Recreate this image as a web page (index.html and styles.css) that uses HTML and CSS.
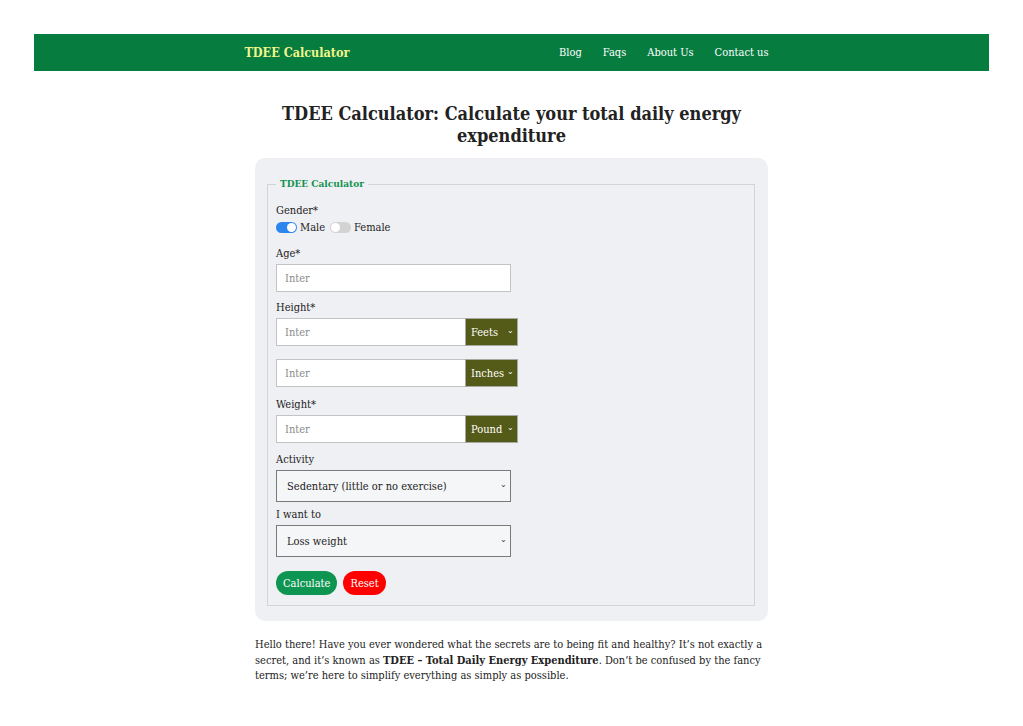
FILE: index.html
```html
<!DOCTYPE html>
<html lang="en">
<head>
  <meta charset="UTF-8" />
  <meta name="viewport" content="width=device-width, initial-scale=1.0"/>
  <title>TDEE Calculator</title>
  <link rel="stylesheet" href="styles.css">
</head>
<body>

  <header class="topbar">
    <div class="topbar-inner">
      <a class="logo" href="#">TDEE Calculator</a>
      <nav class="nav">
        <a href="#">Blog</a>
        <a href="#">Faqs</a>
        <a href="#">About Us</a>
        <a href="#">Contact us</a>
      </nav>
    </div>
  </header>

  <main class="container">
    <h1>TDEE Calculator: Calculate your total daily energy expenditure</h1>

    <div class="calc-card">
      <fieldset>
        <legend>TDEE Calculator</legend>

        <div class="group group-gender">
          <label>Gender*</label>
          <div class="gender-row">
            <span class="switch on"></span><span class="opt">Male</span>
            <span class="switch"></span><span class="opt">Female</span>
          </div>
        </div>

        <div class="group">
          <label for="age">Age*</label>
          <input type="text" id="age" class="text-input" placeholder="Inter">
        </div>

        <div class="group group-height">
          <label>Height*</label>
          <div class="unit-row">
            <input type="text" placeholder="Inter">
            <div class="unit">Feets <span class="chev">&#8964;</span></div>
          </div>
          <div class="unit-row second">
            <input type="text" placeholder="Inter">
            <div class="unit">Inches <span class="chev">&#8964;</span></div>
          </div>
        </div>

        <div class="group group-weight">
          <label>Weight*</label>
          <div class="unit-row">
            <input type="text" placeholder="Inter">
            <div class="unit">Pound <span class="chev">&#8964;</span></div>
          </div>
        </div>

        <div class="group group-activity">
          <label>Activity</label>
          <div class="select-box">Sedentary (little or no exercise) <span class="chev dark">&#8964;</span></div>
        </div>

        <div class="group group-goal">
          <label>I want to</label>
          <div class="select-box">Loss weight <span class="chev dark">&#8964;</span></div>
        </div>

        <div class="buttons">
          <button class="btn btn-calc">Calculate</button>
          <button class="btn btn-reset">Reset</button>
        </div>
      </fieldset>
    </div>

    <p class="intro-text">Hello there! Have you ever wondered what the secrets are to being fit and healthy? It’s not exactly a secret, and it’s known as <strong>TDEE – Total Daily Energy Expenditure</strong>. Don’t be confused by the fancy terms; we’re here to simplify everything as simply as possible.</p>
  </main>

</body>
</html>
```

FILE: styles.css
```css
body {
  margin: 0;
  padding: 34px 34px 0;
  font-family: 'DejaVu Serif Condensed', 'DejaVu Serif', serif;
  font-stretch: condensed;
  background-color: #ffffff;
  color: #222;
}

.topbar {
  background-color: #067c3f;
  height: 37px;
}

.topbar-inner {
  max-width: 524px;
  margin: 0 auto;
  padding-right: 10px;
  height: 100%;
  display: flex;
  align-items: center;
  justify-content: space-between;
}

.logo {
  color: #f2f58c;
  font-weight: 700;
  font-size: 12.5px;
  text-decoration: none;
}

.nav {
  display: flex;
  gap: 21px;
}

.nav a {
  color: #fff;
  font-size: 11px;
  text-decoration: none;
}

.container {
  width: 513px;
  margin: 0 auto;
}

h1 {
  font-size: 18px;
  line-height: 22px;
  text-align: center;
  margin: 32px 0 11px;
  color: #222;
}

.calc-card {
  background-color: #eff0f4;
  border-radius: 10px;
  padding: 18px 13px 15px 12px;
}

fieldset {
  margin: 0;
  border: 1px solid #d3d4d8;
  padding: 11px 8px 10px;
}

legend {
  color: #14924f;
  font-weight: 700;
  font-size: 10px;
  line-height: 16px;
  padding: 0 4px;
}

.group {
  margin-bottom: 8px;
}

.group-gender {
  margin-bottom: 10px;
}

.group-height {
  margin-bottom: 10px;
}

.group-weight {
  margin-bottom: 9px;
}

.group-activity {
  margin-bottom: 5px;
}

.group-goal {
  margin-bottom: 0;
}

label {
  display: block;
  font-size: 11px;
  line-height: 16px;
  margin-bottom: 2px;
}

.group-gender label {
  margin-bottom: 0;
}

.gender-row {
  display: flex;
  align-items: center;
  font-size: 11px;
  height: 17px;
}

.switch {
  position: relative;
  width: 21px;
  height: 11px;
  border-radius: 6px;
  background-color: #d3d3d3;
  margin-right: 3px;
}

.switch::after {
  content: "";
  position: absolute;
  left: 1px;
  top: 1px;
  width: 9px;
  height: 9px;
  border-radius: 50%;
  background: #fff;
}

.switch.on {
  background-color: #2d85ee;
}

.switch.on::after {
  left: 11px;
}

.opt {
  margin-right: 5px;
}

.text-input,
.unit-row input {
  box-sizing: border-box;
  height: 28px;
  border: 1px solid #c3c3c3;
  background: #fff;
  padding: 0 8px;
  font-family: inherit;
  font-size: 11px;
  outline: none;
}

.text-input {
  width: 235px;
}

.text-input::placeholder,
.unit-row input::placeholder {
  color: #8a8a8a;
}

.unit-row {
  display: flex;
  width: 242px;
}

.unit-row.second {
  margin-top: 13px;
}

.unit-row input {
  flex: 1;
  min-width: 0;
  border-right: none;
}

.unit {
  width: 53px;
  box-sizing: border-box;
  height: 28px;
  background-color: #545a17;
  color: #fff;
  font-size: 11px;
  display: flex;
  align-items: center;
  justify-content: space-between;
  padding: 0 3px 0 5px;
  border: 1px solid #a8a8a0;
}

.chev {
  font-size: 8px;
  position: relative;
  top: -2px;
}

.select-box {
  box-sizing: border-box;
  width: 235px;
  height: 32px;
  background-color: #f5f6f8;
  border: 1px solid #7a7a7a;
  font-size: 11px;
  display: flex;
  align-items: center;
  justify-content: space-between;
  padding: 0 3px 0 10px;
}

.chev.dark {
  color: #333;
}

.buttons {
  display: flex;
  gap: 6px;
  margin-top: 14px;
}

.btn {
  border: none;
  border-radius: 12px;
  height: 24px;
  padding: 0 7px;
  color: #fff;
  font-family: inherit;
  font-size: 11px;
  cursor: pointer;
}

.btn-calc {
  background-color: #0f9552;
}

.btn-reset {
  background-color: #ff0000;
}

.intro-text {
  font-size: 11px;
  line-height: 15.5px;
  margin: 16px 0 0;
  color: #222;
}
```
